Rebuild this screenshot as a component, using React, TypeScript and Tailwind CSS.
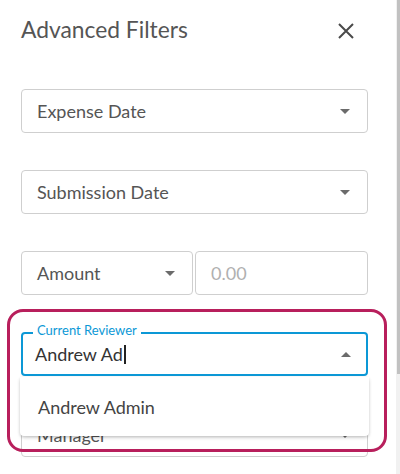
import React from "react";

const font = { fontFamily: "Lato, 'Open Sans', sans-serif" };

function Caret({ up = false }: { up?: boolean }) {
  return (
    <svg width="10" height="5" viewBox="0 0 10 5" className="shrink-0">
      {up ? (
        <polygon points="0,5 10,5 5,0" fill="#6b6b6b" />
      ) : (
        <polygon points="0,0 10,0 5,5" fill="#6b6b6b" />
      )}
    </svg>
  );
}

function SelectBox({ label, className = "" }: { label: string; className?: string }) {
  return (
    <div
      className={`h-[44px] flex items-center justify-between pl-[15px] pr-[17px] border border-[#cfcfcf] rounded-[4px] bg-white ${className}`}
    >
      <span className="text-[18px] text-[#555555] leading-none">{label}</span>
      <Caret />
    </div>
  );
}

export default function App() {
  return (
    <div className="h-[474px] w-[400px] flex overflow-hidden bg-white" style={font}>
      <div className="flex-1 pl-[21px] pr-[28px] pt-[15px]">
        <div className="flex items-start justify-between h-[28px]">
          <h2 className="text-[22.8px] leading-[28px] text-[#555555] font-normal">Advanced Filters</h2>
          <svg width="16" height="16" viewBox="0 0 16 16" className="mt-[8px] mr-[14px]">
            <path d="M1 1 L15 15 M15 1 L1 15" stroke="#4a4a4a" strokeWidth="2" strokeLinecap="butt" />
          </svg>
        </div>

        <div className="mt-[46px] flex flex-col gap-[37px]">
          <SelectBox label="Expense Date" />
          <SelectBox label="Submission Date" />

          <div className="flex gap-[2px]">
            <SelectBox label="Amount" className="w-[172px]" />
            <div className="flex-1 h-[44px] flex items-center pl-[15px] border border-[#cfcfcf] rounded-[4px]">
              <span className="text-[18px] text-[#b0b0b0] leading-none">0.00</span>
            </div>
          </div>

          <div className="relative">
            <div className="h-[44px] flex items-center justify-between pl-[12px] pr-[15px] border-2 border-[#0c98d6] rounded-[4px]">
              <span className="flex items-center text-[18px] text-[#333333] leading-none">
                Andrew Ad
                <span className="inline-block w-[2px] h-[19px] bg-[#222222] ml-[1px]" />
              </span>
              <Caret up />
            </div>
            <span className="absolute left-[12px] top-[-10px] px-[4px] bg-white text-[13px] leading-[16px] text-[#0c98d6]">
              Current Reviewer
            </span>

            <div className="absolute left-[-1px] right-[-1px] top-[45px] h-[59px] z-10 bg-white rounded-b-[4px] flex items-center pl-[18px] shadow-[0_2px_4px_-1px_rgba(0,0,0,0.2),0_1px_3px_0_rgba(0,0,0,0.12)]">
              <span className="text-[18px] text-[#444444] leading-none">Andrew Admin</span>
            </div>

            <div className="absolute left-[-14px] top-[-23px] w-[380px] h-[143px] z-20 border-[3px] border-[#b81f5c] rounded-[16px] pointer-events-none" />
          </div>

          <SelectBox label="Manager" />
        </div>
      </div>

      <div className="w-[4px] h-full bg-[#f1f1f1] flex justify-end">
        <div className="w-[3px] h-[374px] bg-[#c1c1c1]" />
      </div>
    </div>
  );
}
